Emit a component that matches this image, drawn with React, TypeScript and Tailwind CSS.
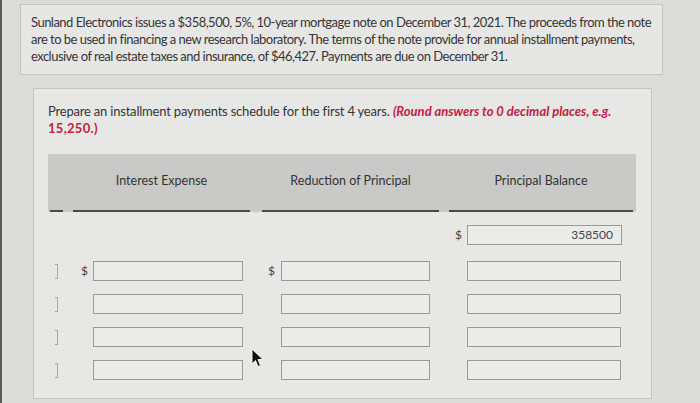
import React from "react";

const font = { fontFamily: "Lato, 'Open Sans', sans-serif" };

function Input({ w, value }: { w: string; value?: string }) {
  return (
    <div
      className={`${w} h-[20px] border border-[#9a9a9a] bg-[#ebebea] flex items-center justify-end pr-[8px] text-[12px] text-[#444]`}
    >
      {value}
    </div>
  );
}

function Row({ mt, first }: { mt: string; first?: boolean }) {
  return (
    <div className={`flex items-center h-[20px] ${mt}`}>
      <div className="w-[13px] ml-[2px] flex justify-center">
        <div className="w-[3px] h-[15px] border-y border-r border-[#a8a8a8]" />
      </div>
      <div className="w-[177px] ml-[10px] flex items-center">
        <span className="w-[20px] pl-[8px] text-[12px] text-[#444]">{first ? "$" : ""}</span>
        <Input w="w-[150px]" />
      </div>
      <div className="w-[177px] ml-[12px] flex items-center">
        <span className="w-[19px] pl-[6px] text-[12px] text-[#444]">{first ? "$" : ""}</span>
        <Input w="w-[149px]" />
      </div>
      <div className="w-[184px] ml-[10px] flex items-center">
        <span className="w-[18px]" />
        <Input w="w-[154px]" />
      </div>
    </div>
  );
}

export default function App() {
  return (
    <div
      className="w-[700px] h-[403px] bg-[#dcdcdb] border-l-2 border-[#5a5a5a] overflow-hidden relative flex flex-col"
      style={font}
    >
      <div className="ml-[18px] mt-[4px] w-[643px] h-[71px] bg-[#e6e6e5] border border-[#c4c4c4] pl-[10px] pt-[9px] text-[13px] leading-[17px] text-[#363636] tracking-[-0.52px] whitespace-nowrap">
        Sunland Electronics issues a $358,500, 5%, 10-year mortgage note on December 31, 2021. The proceeds from the note
        <br />
        are to be used in financing a new research laboratory. The terms of the note provide for annual installment payments,
        <br />
        exclusive of real estate taxes and insurance, of $46,427. Payments are due on December 31.
      </div>

      <div className="ml-[31px] mt-[13px] w-[619px] h-[311px] bg-[#e7e7e5] border border-[#c4c4c4] pl-[14px] pt-[14px]">
        <div className="text-[13px] leading-[17px] text-[#363636] whitespace-nowrap">
          <span className="tracking-[-0.2px]">Prepare an installment payments schedule for the first 4 years.</span>{" "}
          <span className="text-[#c4203f] font-bold italic">(Round answers to 0 decimal places, e.g.</span>
          <br />
          <span className="text-[#c4203f] font-bold tracking-[0.3px]">15,250.)</span>
        </div>

        <div className="mt-[17px] w-[588px] h-[58px] bg-[#c9c9c8] flex items-end">
          <div className="w-[13px] ml-[2px] h-[2px] bg-[#4a4a4a]" />
          <div className="w-[177px] ml-[10px] flex flex-col items-center">
            <span className="text-[12.5px] text-[#333] mb-[19px]">Interest Expense</span>
            <div className="w-full h-[2px] bg-[#4a4a4a]" />
          </div>
          <div className="w-[177px] ml-[12px] flex flex-col items-center">
            <span className="text-[12.5px] text-[#333] mb-[19px]">Reduction of Principal</span>
            <div className="w-full h-[2px] bg-[#4a4a4a]" />
          </div>
          <div className="w-[184px] ml-[10px] flex flex-col items-center">
            <span className="text-[12.5px] text-[#333] mb-[19px]">Principal Balance</span>
            <div className="w-full h-[2px] bg-[#4a4a4a]" />
          </div>
        </div>

        <div className="flex items-center h-[20px] mt-[13px]">
          <div className="w-[401px]" />
          <div className="w-[184px] flex items-center">
            <span className="w-[18px] pl-[6px] text-[12px] text-[#444]">$</span>
            <Input w="w-[155px]" value="358500" />
          </div>
        </div>
        <Row mt="mt-[16px]" first />
        <Row mt="mt-[13px]" />
        <Row mt="mt-[13px]" />
        <Row mt="mt-[13px]" />
      </div>

      <svg
        className="absolute left-[249px] top-[348px]"
        width="13"
        height="20"
        viewBox="0 0 13 20"
      >
        <path
          d="M1 1 L1 16 L4.5 12.5 L7 18.5 L9.5 17.5 L7 11.5 L12 11.5 Z"
          fill="#111"
          stroke="#f2f2f2"
          strokeWidth="1"
        />
      </svg>
    </div>
  );
}
